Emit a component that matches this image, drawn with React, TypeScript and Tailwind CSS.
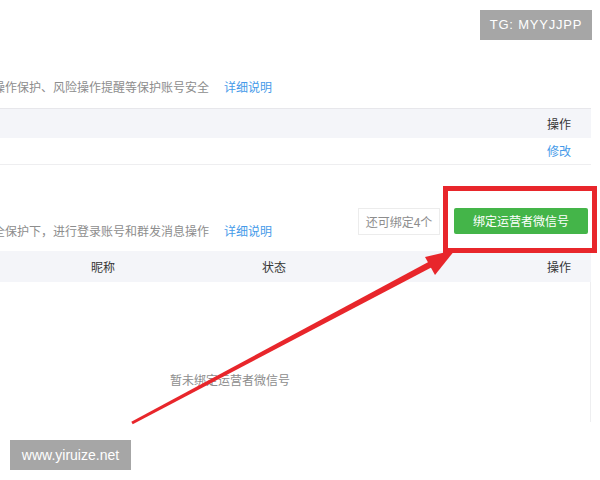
import React from 'react';

const FONT = { fontFamily: '"Noto Sans CJK SC", "Liberation Sans", sans-serif' };

// watermark badges that sit over the page
function Badge({ text, className }: { text: string; className: string }) {
  return (
    <div
      className={`absolute flex items-center justify-center bg-[#a6a6a6] text-white ${className}`}
      style={{ fontFamily: '"Liberation Sans", "Noto Sans", sans-serif' }}
    >
      {text}
    </div>
  );
}

function Arrow() {
  // tapered red shaft from bottom-left up to the bind button, with a triangle head
  return (
    <svg className="absolute left-0 top-0 pointer-events-none" width="600" height="480" viewBox="0 0 600 480">
      <polygon points="131.3,421.7 132.7,424.3 436,265 433,259.5" fill="#e8262b" />
      <polygon points="455,250 425,257 435,275" fill="#e8262b" />
    </svg>
  );
}

export default function App() {
  return (
    <div className="relative w-[600px] h-[480px] overflow-hidden bg-white" style={FONT}>
      <div className="w-[591px] pt-[80px]">
        {/* section 1 description */}
        <div className="-ml-[7px] flex h-[14px] items-center text-[12px] leading-[14px]">
          <span className="text-[#8d8d8d]">操作保护、风险操作提醒等保护账号安全</span>
          <span className="ml-[15px] text-[#459ae9]">详细说明</span>
        </div>

        {/* section 1 table */}
        <div className="mt-[14px]">
          <div className="flex h-[30px] items-center justify-end border-t border-[#e7e7eb] bg-[#f4f5f9] pr-[20px] text-[12px] text-[#353535]">
            操作
          </div>
          <div className="flex h-[27px] items-center justify-end border-b border-[#eeeef0] pr-[20px] text-[12px] text-[#459ae9]">
            修改
          </div>
        </div>

        {/* section 2 toolbar */}
        <div className="mt-[43px] flex h-[43px] items-start">
          <div className="-ml-[7px] mt-[16px] flex h-[14px] items-center text-[12px] leading-[14px]">
            <span className="text-[#8d8d8d]">全保护下，进行登录账号和群发消息操作</span>
            <span className="ml-[15px] text-[#459ae9]">详细说明</span>
          </div>
          <div className="ml-auto flex h-[27px] w-[82px] items-center justify-center border border-[#ececec] text-[12px] text-[#8d8d8d]">
            还可绑定4个
          </div>
          <div className="ml-[14px] mr-[3px] flex h-[26px] w-[134px] items-center justify-center rounded-[2px] bg-[#44b549] text-[12px] text-white">
            绑定运营者微信号
          </div>
        </div>

        {/* section 2 table */}
        <div>
          <div className="flex h-[31px] items-center bg-[#f4f5f9] text-[12px] text-[#353535]">
            <div className="w-[206px] text-center">昵称</div>
            <div className="w-[136px] text-center">状态</div>
            <div className="flex-1 pr-[20px] text-right">操作</div>
          </div>
          <div className="h-[140px] border-r border-[#eeeef0] pl-[170px] pt-[91px] text-[12px] leading-[14px] text-[#8d8d8d]">
            暂未绑定运营者微信号
          </div>
        </div>
      </div>

      {/* highlight box around the button */}
      <div className="absolute left-[443px] top-[186px] h-[67px] w-[154px] border-[5px] border-[#e8262b]" />
      <Arrow />

      <Badge text="TG: MYYJJPP" className="left-[480px] top-[10px] h-[30px] w-[112px] text-[13px] tracking-[0.8px]" />
      <Badge text="www.yiruize.net" className="left-[10px] top-[440px] h-[30px] w-[121px] text-[14px]" />
    </div>
  );
}
